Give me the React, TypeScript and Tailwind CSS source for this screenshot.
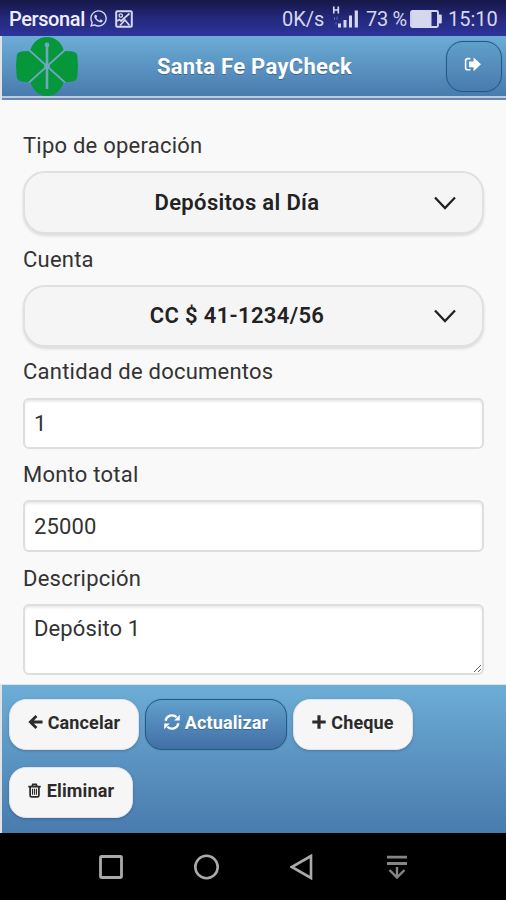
import React, { useState } from 'react';
import { FaWhatsapp } from 'react-icons/fa';

const FONT = "font-[Roboto,'Liberation_Sans',sans-serif]";

type IconProps = { className?: string };

const CloverLogo: React.FC<IconProps> = ({ className }) => (
  <svg viewBox="0 0 64 60" className={className}>
    <g fill="#05973a">
      <path d="M32 30 15 14.500Q20 1 32 1T49 14.500Z" />
      <path d="M32 30 15 45.500Q20 60 32 60T49 45.500Z" />
      <path d="M32 30 15 15Q8 15 5 16Q2 16.500 1.700 20Q.3 30 1.700 40Q2 44 5 45Q8 46 15 46Z" />
      <path d="M32 30 49 15Q56 15 59 16Q62 16.500 62.300 20Q63.700 30 62.300 40Q62 44 59 45Q56 46 49 46Z" />
    </g>
    <path d="M14 14 50 46.500M50 14 14 46.500" stroke="#6ca9c0" strokeWidth="1.700" fill="none" />
    <path d="M32 9v44" stroke="#6ca9c0" strokeWidth="2.600" fill="none" />
    <circle cx="32" cy="9" r="2.400" fill="#6ca9c0" />
    <circle cx="32" cy="30" r="2.800" fill="#6ca9c0" />
  </svg>
);

const SignOutIcon: React.FC<IconProps> = ({ className }) => (
  <svg viewBox="0 0 16 14" className={className}>
    <path d="M6 1.500H3.500Q1.500 1.500 1.500 3.500V10Q1.500 12 3.500 12H6" fill="none" stroke="currentColor" strokeWidth="1.500" />
    <path d="M9 .3 16 6.800 9 13.300V9.600H4.800V4.100H9Z" fill="currentColor" />
  </svg>
);

const PictureIcon: React.FC<IconProps> = ({ className }) => (
  <svg viewBox="0 0 18 18" className={className} fill="none" stroke="currentColor" strokeWidth="2">
    <rect x="1.200" y="1.200" width="15.600" height="15.600" rx="1" />
    <circle cx="5.800" cy="5.500" r="1.700" strokeWidth="1.300" />
    <path d="M2 11 4.500 9.500 6 11 14.500 3.500M5 15.500 10 10 14.500 15.500" strokeWidth="1.700" />
  </svg>
);

const SignalIcon: React.FC<IconProps> = ({ className }) => (
  <svg viewBox="0 0 28 24" className={className} fill="currentColor">
    <path d="M1.800 1.500v7M6.300 1.500v7M1.800 5h4.500" fill="none" stroke="currentColor" strokeWidth="1.700" />
    <rect x="6" y="18.500" width="3" height="4" />
    <rect x="11.500" y="15" width="3" height="7.500" />
    <rect x="17" y="10.500" width="3" height="12" />
    <rect x="22.700" y="5.500" width="3.200" height="17" />
    <path d="M2.500 12v3M5 11.500v3.500M4 17v2.500" stroke="currentColor" strokeWidth="1" opacity=".35" />
  </svg>
);

const BatteryIcon: React.FC<IconProps> = ({ className }) => (
  <svg viewBox="0 0 32 18" className={className}>
    <rect x="1" y="1" width="27" height="16" rx="1.500" fill="none" stroke="currentColor" strokeWidth="1.900" />
    <rect x="2" y="2" width="19.500" height="14" fill="currentColor" />
    <rect x="28.500" y="4.500" width="3.300" height="9" rx="1" fill="currentColor" />
  </svg>
);

const ChevronIcon: React.FC<IconProps> = ({ className }) => (
  <svg viewBox="0 0 24 14" className={className} fill="none" stroke="currentColor" strokeWidth="2.300">
    <path d="M2 1.500 12 12 22 1.500" />
  </svg>
);

const ArrowLeftIcon: React.FC<IconProps> = ({ className }) => (
  <svg viewBox="0 0 16 16" className={className} fill="none" stroke="currentColor" strokeWidth="3">
    <path d="M9 1.500 2.500 8 9 14.500M3 8h12.500" />
  </svg>
);

const RefreshIcon: React.FC<IconProps> = ({ className }) => (
  <svg viewBox="0 0 16 16" className={className}>
    <path d="M1.600 6.800A6.500 6.500 0 0 1 12.600 3.300M14.400 9.200A6.500 6.500 0 0 1 3.400 12.700" fill="none" stroke="currentColor" strokeWidth="2.300" />
    <path d="M15.800.8v5.600h-5.600ZM.2 15.200V9.600h5.600Z" fill="currentColor" />
  </svg>
);

const PlusIcon: React.FC<IconProps> = ({ className }) => (
  <svg viewBox="0 0 14 14" className={className} fill="none" stroke="currentColor" strokeWidth="3.200">
    <path d="M7 .3v13.400M.3 7h13.400" />
  </svg>
);

const TrashIcon: React.FC<IconProps> = ({ className }) => (
  <svg viewBox="0 0 14 16" className={className} fill="none" stroke="currentColor" strokeWidth="1.900">
    <path d="M.3 3.800h13.400M4.500 3.500 5.200 1.300h3.600l.7 2.200M2.300 4v9.300q0 1.500 1.500 1.500h6.400q1.500 0 1.500-1.500V4" />
    <path d="M4.900 6v6.500M7 6v6.500M9.100 6v6.500" strokeWidth="1.200" />
  </svg>
);

const StatusBar: React.FC = () => (
  <div className="flex h-9 items-center justify-between bg-linear-to-b from-[#151746] via-[#24287c] to-[#2d349b] pl-[9px] pr-[9px] pt-0.5 text-[#d5d7ef]">
    <div className="flex items-center">
      <span className="w-[78px] whitespace-nowrap text-[20px] font-medium tracking-[-0.400px] text-[#eeeffc]">Personal</span>
      <FaWhatsapp className="mb-0.5 ml-[2px] h-[19px] w-[19px]" />
      <PictureIcon className="mb-px ml-[7px] h-[18px] w-[18px]" />
    </div>
    <div className="flex items-center whitespace-nowrap text-[20px]">
      <span className="w-[44px]">0K/s</span>
      <SignalIcon className="mb-1 ml-[6px] h-6 w-7" />
      <span className="ml-[6px] w-[42px] tracking-[-0.300px]">73 %</span>
      <BatteryIcon className="mb-px ml-[2px] h-[18px] w-8" />
      <span className="ml-[6px] w-[49px]">15:10</span>
    </div>
  </div>
);

const Header: React.FC = () => (
  <header className="flex h-16 border-l-2 border-[#dfe2e7]">
    <div className="flex flex-1 flex-col">
      <div className="flex h-[60px] items-center justify-between bg-linear-to-b from-[#6dadd6] to-[#497bae] pl-[13px] pr-1">
        <CloverLogo className="h-[60px] w-16" />
        <h1 className="mr-4 text-[22px] font-bold tracking-[0.300px] text-white [text-shadow:0_1px_0_#3e6790]">Santa Fe PayCheck</h1>
        <button className="mt-px flex h-[51px] w-[56px] items-center justify-center rounded-[17px] border-[1.500px] border-[#1f5b85] bg-linear-to-b from-[#609fcb] to-[#497bae] text-white shadow-[0_0_1px_#1f5b85]">
          <SignOutIcon className="mb-[4px] mr-[3px] h-[15px] w-[17px]" />
        </button>
      </div>
      <div className="h-[2px] bg-[#b9cce0]" />
      <div className="h-[2px] bg-[#6b87b0]" />
    </div>
  </header>
);

const Label: React.FC<{ children: string }> = ({ children }) => (
  <label className="block h-7 whitespace-nowrap pt-px text-[22px] leading-7 tracking-[0.230px] text-[#333]">{children}</label>
);

const SelectField: React.FC<{ value: string; className: string }> = ({ value, className }) => (
  <button className={`flex w-full items-center rounded-[22px] border-2 border-[#e0e0e0] bg-[#f5f5f5] pl-4 pr-[25px] text-[#222] shadow-[0_2px_3px_rgba(0,0,0,0.12)] ${className}`}>
    <span className="flex-1 text-center text-[22px] font-semibold tracking-[0.350px]">{value}</span>
    <ChevronIcon className="mt-px h-[14px] w-6" />
  </button>
);

const INPUT = 'w-full rounded-md border-2 border-[#dedede] bg-white px-[9px] text-[22px] tracking-[0.130px] text-[#333] shadow-[inset_0_2px_2px_rgba(0,0,0,0.08)] outline-none';

const LIGHT_BTN = 'flex h-[51px] items-center justify-center whitespace-nowrap rounded-[17px] border border-[#dce3ea] bg-[#f6f6f6] pb-[5px] text-[18px] font-bold tracking-[0.120px] text-[#2b2b2b] shadow-[0_1px_3px_rgba(0,0,0,0.2)]';

export default function App() {
  const [count, setCount] = useState('1');
  const [amount, setAmount] = useState('25000');
  const [description, setDescription] = useState('Depósito 1');

  return (
    <div className={`flex h-[900px] w-[506px] flex-col overflow-hidden bg-[#f9f9f9] ${FONT}`}>
      <StatusBar />
      <Header />

      <main className="flex h-[584px] flex-col pl-[23px] pr-[22px] pt-[31px]">
        <Label>Tipo de operación</Label>
        <SelectField value="Depósitos al Día" className="mb-[11px] mt-3 h-[63px]" />
        <Label>Cuenta</Label>
        <SelectField value="CC $ 41-1234/56" className="mb-[10px] mt-3 h-[62px] pb-px" />
        <Label>Cantidad de documentos</Label>
        <input className={`${INPUT} mb-[11px] mt-[13px] h-[51px]`} value={count} onChange={(e) => setCount(e.target.value)} />
        <Label>Monto total</Label>
        <input className={`${INPUT} mb-3 mt-3 h-[52px]`} value={amount} onChange={(e) => setAmount(e.target.value)} />
        <Label>Descripción</Label>
        <textarea className={`${INPUT} mt-3 h-[71px] pt-[9px] leading-7`} value={description} onChange={(e) => setDescription(e.target.value)} />
      </main>

      {/* Action buttons */}
      <footer className="flex h-[149px] flex-wrap content-start gap-x-[6px] gap-y-[17px] border-l-2 border-t border-[#dfe2e7] bg-linear-to-b from-[#6dadd6] to-[#497bae] pl-[7px] pt-[14px]">
        <button className={`${LIGHT_BTN} w-[130px]`}>
          <ArrowLeftIcon className="mr-[5px] h-4 w-[15px]" />
          Cancelar
        </button>
        <button className="flex h-[51px] w-[142px] items-center justify-center whitespace-nowrap rounded-[17px] border-[1.500px] border-[#1f5b85] bg-linear-to-b from-[#62a0cc] to-[#426fa6] pb-[5px] text-[18px] font-bold tracking-[0.120px] text-white shadow-[0_0_1px_#1f5b85] [text-shadow:0_1px_0_#3e6790]">
          <RefreshIcon className="mr-[5px] h-4 w-4" />
          Actualizar
        </button>
        <button className={`${LIGHT_BTN} w-[120px]`}>
          <PlusIcon className="mr-[5px] h-[14px] w-[14px]" />
          Cheque
        </button>
        <button className={`${LIGHT_BTN} w-[124px]`}>
          <TrashIcon className="mr-[6px] h-[15px] w-[13px]" />
          Eliminar
        </button>
      </footer>

      {/* Android navigation */}
      <nav className="flex h-[67px] items-center gap-[70px] bg-black pl-[98px] text-[#aaa]">
        <svg viewBox="0 0 26 26" className="h-[26px] w-[26px]" fill="none" stroke="currentColor" strokeWidth="2.800">
          <rect x="2.500" y="2.500" width="21" height="21" rx="1" />
        </svg>
        <svg viewBox="0 0 26 26" className="h-[26px] w-[26px]" fill="none" stroke="currentColor" strokeWidth="2.600">
          <circle cx="12.500" cy="13" r="11.200" />
        </svg>
        <svg viewBox="0 0 26 28" className="h-7 w-[26px]" fill="none" stroke="currentColor" strokeWidth="2.600">
          <path d="M21 3 1.800 14 21 25Z" />
        </svg>
        <svg viewBox="0 0 22 26" className="h-[26px] w-[22px] text-[#858585]" fill="none" stroke="currentColor" strokeWidth="2.800">
          <path d="M1 3.200h20M1 9.500h20" />
          <path d="M11 13v10M3.500 16 11 23.500 18.500 16" strokeWidth="2.400" />
        </svg>
      </nav>
    </div>
  );
}
